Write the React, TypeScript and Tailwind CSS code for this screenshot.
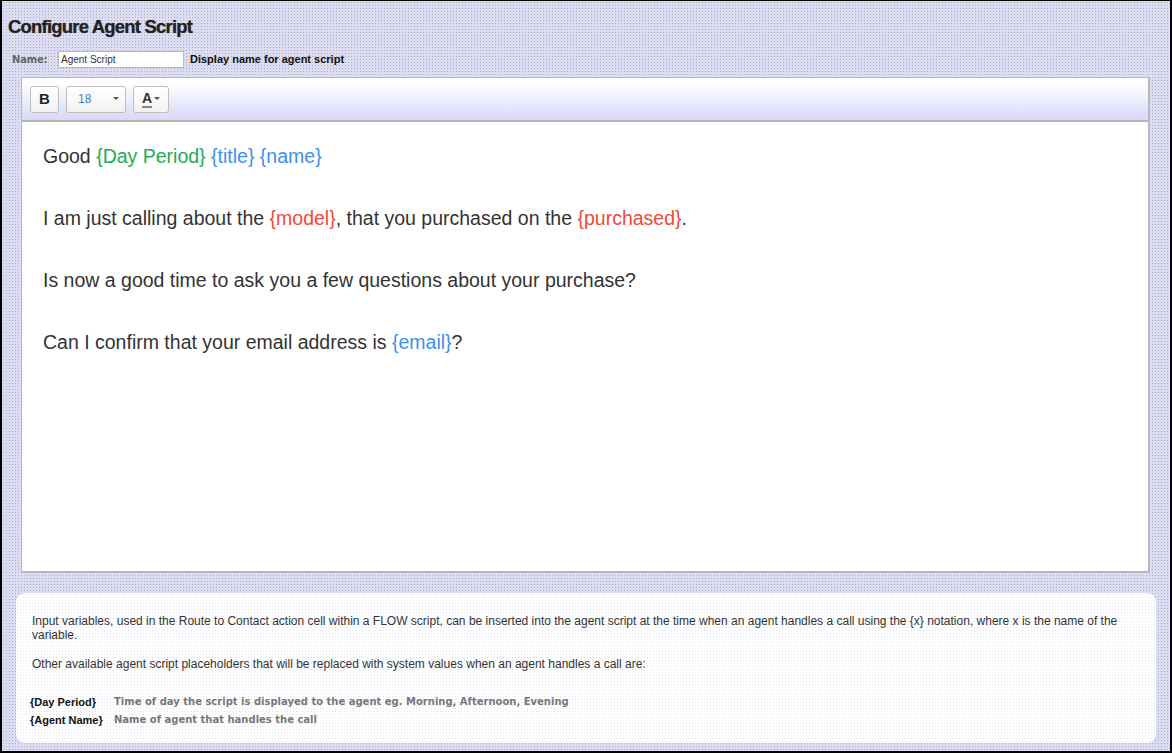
const dotted =
  'bg-[#dcdcf4] bg-[radial-gradient(#b0b0b0_0.7px,transparent_0.9px)] bg-[length:3px_3px]';

function Var({ color, children }: { color: 'green' | 'blue' | 'red'; children: string }) {
  const cls =
    color === 'green' ? 'text-[#22ab58]' : color === 'blue' ? 'text-[#3f8fec]' : 'text-[#f2483a]';
  return <span className={cls}>{children}</span>;
}

function Caret() {
  return (
    <svg width="6" height="4" viewBox="0 0 6 4" className="fill-[#555]">
      <path d="M0 0h6L3 3z" />
    </svg>
  );
}

const intro =
  'Input variables, used in the Route to Contact action cell within a FLOW script, can be inserted into the agent script at the time when an agent handles a call using the {x} notation, where x is the name of the variable.';

export default function App() {
  return (
    <div
      className={`w-[1172px] h-[753px] border-2 border-t border-black flex flex-col overflow-hidden font-['Liberation_Sans',Arial,sans-serif] ${dotted}`}
    >
      {/* Header */}
      <h1 className="pl-[6px] pt-[15px] text-[18.5px] leading-[22px] font-bold tracking-[-0.8px] text-[#222] [text-shadow:0_0_1px_#666]">
        Configure Agent Script
      </h1>

      {/* Name row */}
      <div className="flex items-center mt-[13px] h-[17px]">
        <span className="ml-[10px] w-[46px] text-[10px] font-bold text-[#666] font-['DejaVu_Sans',sans-serif] tracking-[-0.2px]">
          Name:
        </span>
        <input
          defaultValue="Agent Script"
          className="w-[126px] h-[17px] border border-[#bbb] bg-white px-[2px] text-[10px] text-[#333] outline-none"
        />
        <span className="ml-[6px] text-[11px] font-bold text-[#111]">Display name for agent script</span>
      </div>

      {/* Editor */}
      <div className="mt-[9px] ml-[19px] mr-[20px] h-[496px] border-2 border-[#b8b8b8] border-t border-l bg-white flex flex-col">
        <div className="h-[44px] shrink-0 flex items-center gap-[7px] pl-[8px] border-b-2 border-[#b4b4b4] bg-[linear-gradient(#ffffff_10%,#d8d8fa)]">
          <button className="w-[29px] h-[27px] rounded-[3px] border border-[#bdbdbd] bg-[linear-gradient(#fff,#f2f2f2)] flex items-center justify-center text-[15px] font-bold text-[#222]">
            B
          </button>
          <button className="w-[60px] h-[27px] rounded-[3px] border border-[#bdbdbd] bg-[linear-gradient(#fff,#f2f2f2)] flex items-center justify-between pl-[11px] pr-[6px] text-[12px] text-[#3a7fd8]">
            18
            <Caret />
          </button>
          <button className="w-[36px] h-[27px] rounded-[3px] border border-[#bdbdbd] bg-[linear-gradient(#fff,#f2f2f2)] flex items-center justify-center gap-[2px] text-[#333]">
            <span className="text-[14px] font-bold leading-[14px] border-b-2 border-[#888] pb-[1px]">A</span>
            <Caret />
          </button>
        </div>
        <div className="flex flex-col gap-[38px] pt-[22px] pl-[21px] text-[19.5px] leading-[24px] text-[#333]">
          <p>
            Good <Var color="green">{'{Day Period}'}</Var> <Var color="blue">{'{title}'}</Var>{' '}
            <Var color="blue">{'{name}'}</Var>
          </p>
          <p>
            I am just calling about the <Var color="red">{'{model}'}</Var>, that you purchased on the{' '}
            <Var color="red">{'{purchased}'}</Var>.
          </p>
          <p>Is now a good time to ask you a few questions about your purchase?</p>
          <p>
            Can I confirm that your email address is <Var color="blue">{'{email}'}</Var>?
          </p>
        </div>
      </div>

      {/* Help panel */}
      <div className="mt-[20px] ml-[14px] mr-[14px] h-[150px] rounded-[9px] bg-white bg-[radial-gradient(#e2e2f2_0.7px,transparent_0.9px)] bg-[length:3px_3px] pt-[21px] px-[16px] text-[12px] leading-[14px] text-[#333]">
        <p>{intro}</p>
        <p className="mt-[15px]">
          Other available agent script placeholders that will be replaced with system values when an agent
          handles a call are:
        </p>
        <div className="mt-[24px] grid grid-cols-[84px_1fr] gap-y-[4px] -ml-[2px] text-[11px] leading-[14px]">
          <span className="text-[#111] font-semibold">{'{Day Period}'}</span>
          <span className="font-['DejaVu_Sans',sans-serif] font-bold text-[10px] text-[#777]">
            Time of day the script is displayed to the agent eg. Morning, Afternoon, Evening
          </span>
          <span className="text-[#111] font-semibold">{'{Agent Name}'}</span>
          <span className="font-['DejaVu_Sans',sans-serif] font-bold text-[10px] text-[#777]">
            Name of agent that handles the call
          </span>
        </div>
      </div>
    </div>
  );
}
